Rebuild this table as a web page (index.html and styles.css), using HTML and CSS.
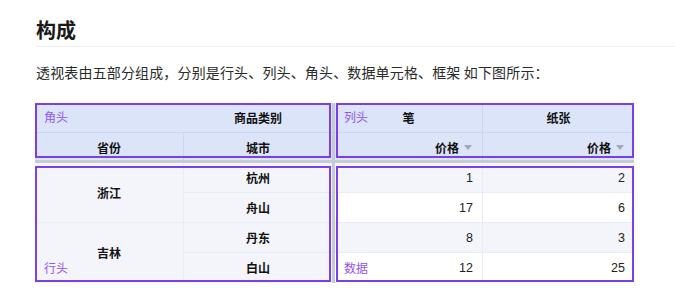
FILE: index.html
```html
<!DOCTYPE html>
<html lang="zh">
<head>
<meta charset="utf-8">
<link rel="stylesheet" href="styles.css">
</head>
<body>
<div class="page">
  <h2 class="title">构成</h2>
  <p class="desc">透视表由五部分组成，分别是行头、列头、角头、数据单元格、框架 如下图所示：</p>
  <div class="pivot">
    <div class="quad corner">
      <div class="cell hd blank"></div>
      <div class="cell hd">商品类别</div>
      <div class="cell hd r2">省份</div>
      <div class="cell hd r2">城市</div>
      <span class="box box-corner"></span>
      <span class="tag tag-top">角头</span>
    </div>
    <div class="quad colhead">
      <div class="cell hd">笔</div>
      <div class="cell hd">纸张</div>
      <div class="cell hd r2 right">价格<svg class="sort" width="8" height="5" viewBox="0 0 8 5"><path d="M0 0H8L4 5Z" fill="#a3a8b3"/></svg></div>
      <div class="cell hd r2 right">价格<svg class="sort" width="8" height="5" viewBox="0 0 8 5"><path d="M0 0H8L4 5Z" fill="#a3a8b3"/></svg></div>
      <span class="box box-col"></span>
      <span class="tag tag-top">列头</span>
    </div>
    <div class="quad rowhead">
      <div class="cell rh span2">浙江</div>
      <div class="cell rh">杭州</div>
      <div class="cell rh">舟山</div>
      <div class="cell rh span2">吉林</div>
      <div class="cell rh">丹东</div>
      <div class="cell rh last">白山</div>
      <span class="box box-row"></span>
      <span class="tag tag-bottom">行头</span>
    </div>
    <div class="quad data">
      <div class="cell dc odd">1</div>
      <div class="cell dc odd">2</div>
      <div class="cell dc">17</div>
      <div class="cell dc">6</div>
      <div class="cell dc odd">8</div>
      <div class="cell dc odd">3</div>
      <div class="cell dc last">12</div>
      <div class="cell dc last">25</div>
      <span class="box box-data"></span>
      <span class="tag tag-bottom">数据</span>
    </div>
  </div>
</div>
</body>
</html>
```

FILE: styles.css
```css
* { box-sizing: border-box; }
html, body {
  margin: 0;
  padding: 0;
  background: #fff;
}
body {
  font-family: "Noto Sans CJK SC", "Noto Sans", sans-serif;
  color: #333;
}
.page {
  padding: 16px 0 0 36px;
}
.title {
  margin: 0;
  font-size: 20px;
  line-height: 28px;
  font-weight: 700;
  color: #1a1a1a;
  padding-bottom: 2px;
  border-bottom: 1px solid #f0f0f0;
}
.desc {
  margin: 14px 0 0;
  font-size: 14px;
  line-height: 22px;
  color: #2b2b2b;
  letter-spacing: 0.15px;
}
.pivot {
  margin: 20px 0 0 -1px;
  display: grid;
  grid-template-columns: 297px 299px;
  grid-template-rows: 57px 120px;
  column-gap: 3px;
  row-gap: 3px;
  width: 599px;
  background: #c3cad9;
}
.quad {
  position: relative;
  display: grid;
  font-size: 12px;
  line-height: 16px;
}
.corner {
  grid-template-columns: 149px 148px;
  grid-template-rows: 30px 27px;
  background: #dce4fa;
}
.colhead {
  grid-template-columns: 148px 151px;
  grid-template-rows: 30px 27px;
  background: #dce4fa;
}
.rowhead {
  grid-template-columns: 149px 148px;
  grid-template-rows: repeat(4, 30px);
  background: #f4f5fb;
}
.data {
  grid-template-columns: 148px 151px;
  grid-template-rows: repeat(4, 30px);
  background: #fff;
}
.cell {
  display: flex;
  align-items: center;
  justify-content: center;
}
.hd {
  font-weight: 700;
  color: #111;
  border-right: 1px solid #cdd6f1;
  border-bottom: 1px solid #cdd6f1;
}
.hd.blank { border-right: 0; }
.hd.r2 { border-bottom: 0; padding-top: 2px; }
.hd:nth-child(2), .hd:nth-child(4) { border-right: 0; }
.right {
  justify-content: flex-end;
  padding-right: 10px;
}
.sort { margin-left: 5px; }
.rh {
  font-weight: 700;
  color: #111;
  border-bottom: 1px solid #e8ecf6;
}
.rh.span2 { border-right: 1px solid #e8ecf6; }
.rh.last, .rowhead .rh:nth-child(4) { border-bottom: 0; }
.rowhead .rh:nth-child(1) { grid-row: 1 / span 2; grid-column: 1; }
.rowhead .rh:nth-child(2) { grid-row: 1; grid-column: 2; }
.rowhead .rh:nth-child(3) { grid-row: 2; grid-column: 2; }
.rowhead .rh:nth-child(4) { grid-row: 3 / span 2; grid-column: 1; }
.rowhead .rh:nth-child(5) { grid-row: 3; grid-column: 2; }
.rowhead .rh:nth-child(6) { grid-row: 4; grid-column: 2; }
.dc {
  justify-content: flex-end;
  padding-right: 9px;
  color: #222;
  font-family: "Liberation Sans", "Noto Sans CJK SC", sans-serif;
  font-size: 12.5px;
  border-bottom: 1px solid #e8ecf6;
}
.dc:nth-child(odd) { border-right: 1px solid #e8ecf6; }
.dc.odd { background: #f4f5fb; }
.dc.last { border-bottom: 0; }
.box {
  position: absolute;
  border: 2px solid #7c3fe6;
  pointer-events: none;
}
.box-corner { top: 0; left: 0; right: 1px; bottom: 2px; }
.box-col { top: 0; left: 1px; right: 0; bottom: 2px; }
.box-row { top: 3px; left: 0; right: 1px; bottom: 1px; }
.box-data { top: 3px; left: 1px; right: 0; bottom: 1px; }
.tag {
  position: absolute;
  left: 9px;
  font-size: 12px;
  line-height: 16px;
  color: #9256f0;
}
.tag-top { top: 6px; }
.tag-bottom { bottom: 7px; }
```
